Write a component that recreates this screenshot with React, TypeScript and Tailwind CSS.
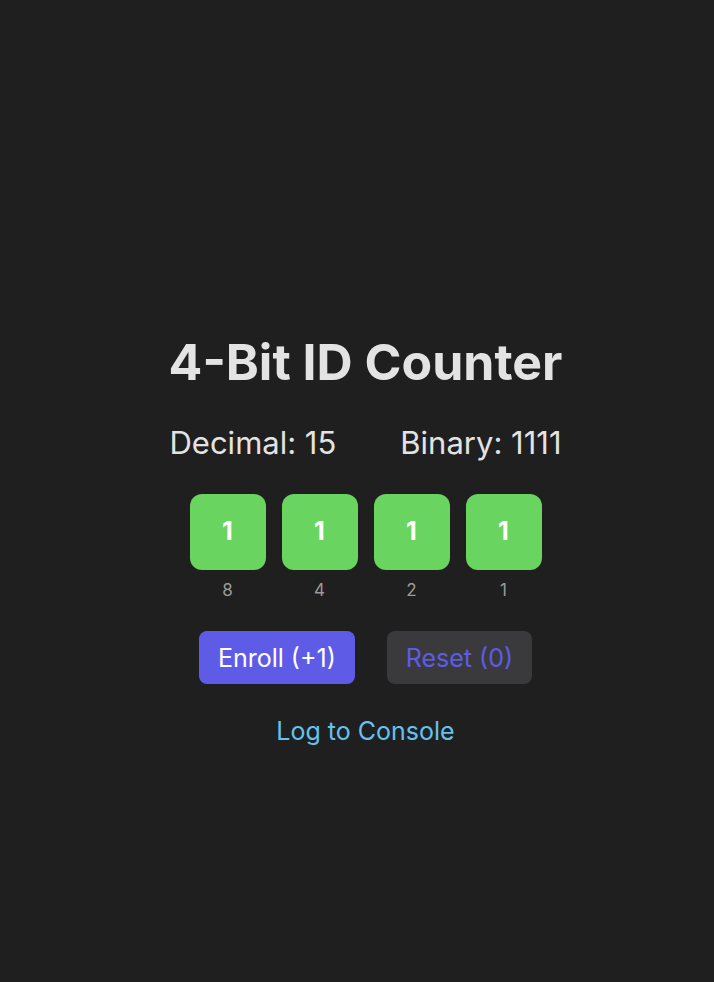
import { useState } from "react";

const App = () => {
    const [count, setCount] = useState(15);
    const bits = [8, 4, 2, 1];

    return (
        <div className="min-h-screen w-full bg-[#1f1f1f] flex flex-col items-center pt-[330px] pl-[17px] font-['Inter',sans-serif]">
            <h1 className="text-[50px] leading-[64px] font-bold text-[#e3e3e3]">4-Bit ID Counter</h1>

            <div className="mt-[29px] flex gap-16 text-[31px] leading-[40px] text-[#e3e3e3]">
                <span>Decimal: {count}</span>
                <span>Binary: {count.toString(2).padStart(4, "0")}</span>
            </div>

            <div className="mt-[31px] flex gap-4">
                {bits.map((b) => (
                    <div key={b} className="flex flex-col items-center">
                        <div className="w-[76px] h-[76px] rounded-xl bg-[#6ad460] flex items-center justify-center text-[25px] font-bold text-white">
                            {count & b ? 1 : 0}
                        </div>
                        <span className="mt-2 text-[17px] leading-6 text-[#9b9b9b]">{b}</span>
                    </div>
                ))}
            </div>

            <div className="mt-[29px] flex gap-8">
                <button
                    className="h-[53px] px-[19px] rounded-lg bg-[#5e5ce6] text-white text-[25px] leading-8"
                    onClick={() => setCount((c) => (c + 1) % 16)}
                >
                    Enroll (+1)
                </button>
                <button
                    className="h-[53px] px-[19px] rounded-lg bg-[#3a3a3c] text-[#5e5ce6] text-[25px] leading-8"
                    onClick={() => setCount(0)}
                >
                    Reset (0)
                </button>
            </div>

            <button className="mt-[31px] text-[25px] leading-8 text-[#64c2ef]" onClick={() => console.log(count)}>
                Log to Console
            </button>
        </div>
    );
};

export default App;
